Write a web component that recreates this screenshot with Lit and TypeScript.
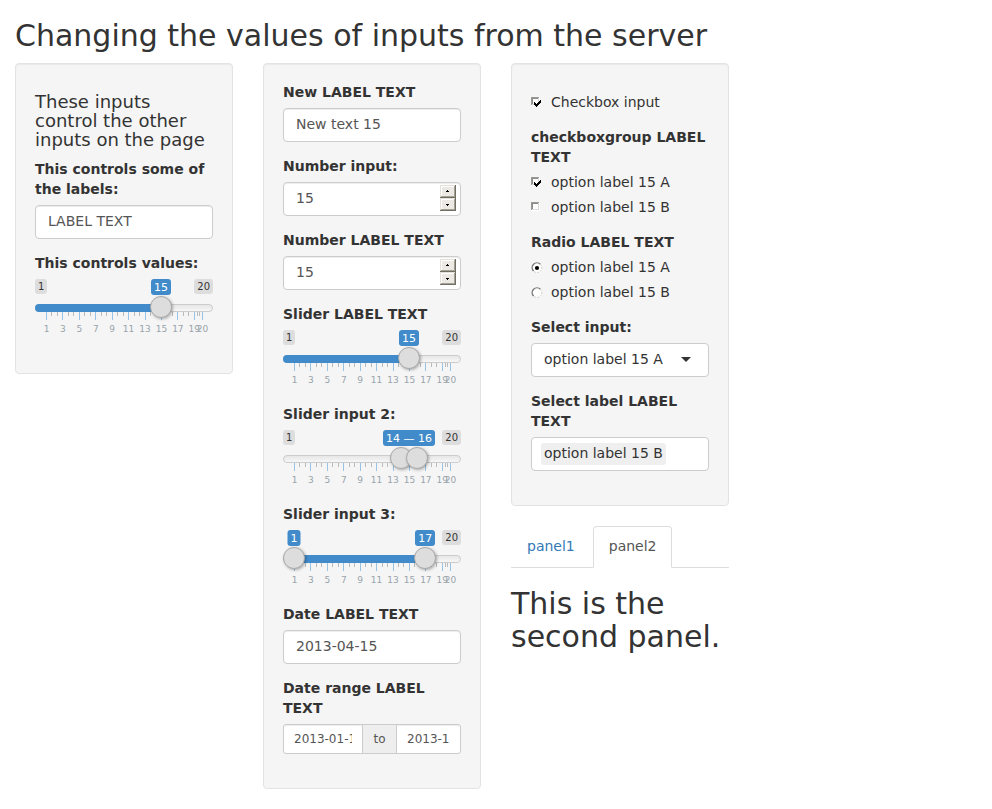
import { LitElement, html, svg, css } from "lit";
import { customElement, property } from "lit/decorators.js";
import { styleMap } from "lit/directives/style-map.js";

const MIN = 1;
const MAX = 20;
const percent = (v: number) => ((v - MIN) / (MAX - MIN)) * 100;

@customElement("range-slider")
class RangeSlider extends LitElement {
  @property({ type: Array }) values: number[] = [15];
  @property({ type: Boolean }) merged = false;

  static styles = css`
    :host { display: block; height: 60px; position: relative; line-height: 1.333; color: #333; }
    .tag { position: absolute; top: 0; font-size: 10px; height: 15px; line-height: 15px; padding: 0 3px; border-radius: 3px; background: #dddddd; white-space: nowrap; }
    .min { left: 0; }
    .max { right: 0; }
    .value { font-size: 11px; height: 16px; line-height: 18px; background: #428bca; color: #fff; transform: translateX(-50%); }
    .line { position: absolute; box-sizing: border-box; left: 0; right: 0; top: 25px; height: 8px; border: 1px solid #ccc; border-radius: 8px; background: linear-gradient(#dedede -50%, #fff 150%); }
    .track { position: absolute; left: 11px; right: 11px; top: 0; height: 60px; }
    .bar { position: absolute; top: 25px; height: 8px; background: #428bca; }
    .single { border-radius: 8px 0 0 8px; }
    .handle { position: absolute; top: 17px; width: 22px; height: 22px; box-sizing: border-box; border: 1px solid #aaa; border-radius: 50%; background: #ddd; box-shadow: 1px 1px 3px rgba(0, 0, 0, 0.3); transform: translateX(-11px); }
    .tick { position: absolute; top: 33px; width: 1px; height: 4px; background: #bbb; }
    .major { height: 8px; background: #99c2e4; }
    .number { position: absolute; top: 44px; font-size: 9px; line-height: 12px; color: #99a4ac; transform: translateX(-50%); }
  `;

  private grid() {
    const stops = [1, 3, 5, 7, 9, 11, 13, 15, 17, 19, 20];
    return stops.map((n, i) => {
      const next = stops[i + 1];
      const minors = next ? [1, 2].map((k) => n + ((next - n) * k) / 3) : [];
      return html`
        <span class="tick major" style=${styleMap({ left: percent(n) + "%" })}></span>
        ${minors.map((m) => html`<span class="tick" style=${styleMap({ left: percent(m) + "%" })}></span>`)}
        <span class="number" style=${styleMap({ left: `calc(${percent(n)}% + 0.5px)` })}>${n}</span>`;
    });
  }

  render() {
    const v = this.values;
    const last = v[v.length - 1];
    const bar = v.length === 1
      ? html`<span class="bar single" style=${styleMap({ left: "-11px", width: `calc(${percent(last)}% + 11px)` })}></span>`
      : this.merged ? "" : html`<span class="bar" style=${styleMap({ left: percent(v[0]) + "%", width: percent(last) - percent(v[0]) + "%" })}></span>`;
    return html`
      <div class="line"></div>
      ${v.length > 1 && v[0] === MIN ? "" : html`<span class="tag min">${MIN}</span>`}
      <span class="tag max">${MAX}</span>
      <div class="track">
        ${this.grid()} ${bar}
        ${this.merged
          ? html`<span class="tag value" style=${styleMap({ left: percent((v[0] + last) / 2) + "%" })}>${v[0]} — ${last}</span>`
          : v.map((n) => html`<span class="tag value" style=${styleMap({ left: percent(n) + "%" })}>${n}</span>`)}
        ${v.map((n) => html`<span class="handle" style=${styleMap({ left: percent(n) + "%" })}></span>`)}
      </div>`;
  }
}

const spinButton = (y: number, up: boolean) => svg`
  <g transform="translate(0 ${y})">
    <rect width="16" height="13" fill="#716f64"/>
    <rect width="15" height="12" fill="#e4e0d8"/>
    <rect x="1" y="1" width="14" height="11" fill="#a5a197"/>
    <rect x="1" y="1" width="13" height="10" fill="#fff"/>
    <rect x="2" y="2" width="12" height="9" fill="#ece9e4"/>
    ${up
      ? svg`<rect x="7" y="5" width="1" height="1"/><rect x="6" y="6" width="3" height="1"/>`
      : svg`<rect x="6" y="6" width="3" height="1"/><rect x="7" y="7" width="1" height="1"/>`}
  </g>`;

const spinner = html`<svg class="spinner" width="16" height="26" shape-rendering="crispEdges">${spinButton(0, true)}${spinButton(13, false)}</svg>`;

const checkbox = (on: boolean) => html`<svg class="mark" width="13" height="13" shape-rendering="crispEdges">
  <rect x="0" y="1" width="9" height="9" fill="#fff"/>
  <path d="M0 1h8v1h-7v7h-1z" fill="#9a9a98"/>
  <path d="M1 2h6v1h-5v5h-1z" fill="#8c8b88"/>
  <path d="M7 2h1v7h-7v-1h6z" fill="#dedbd6"/>
  ${on ? svg`<path d="M3 6h1v1h1v1h1v-1h1v-1h1v-1h1v-1h1v3h-1v1h-1v1h-1v1h-1v1h-1v-1h-1v-1h-1z" fill="#000"/>` : ""}
</svg>`;

const radio = (on: boolean) => html`<svg class="mark" width="13" height="13">
  <circle cx="6" cy="6.7" r="5" fill="#fff"/>
  <path d="M2.6 10.1A4.8 4.8 0 0 1 9.4 3.3" fill="none" stroke="#777" stroke-width="1.4"/>
  <path d="M9.4 3.3A4.8 4.8 0 0 1 2.6 10.1" fill="none" stroke="#d4d0c8" stroke-width="1" stroke-dasharray="2 1"/>
  ${on ? svg`<circle cx="6" cy="7" r="2.1" fill="#000"/>` : ""}
</svg>`;

@customElement("app-root")
class AppRoot extends LitElement {
  static styles = css`
    :host { display: block; box-sizing: border-box; width: 992px; height: 809px; padding: 19px 15px 0; background: #fff; color: #333; font: 14px/20px "DejaVu Sans", Verdana, sans-serif; overflow: hidden; }
    * { box-sizing: border-box; }
    h2, h4 { font-weight: 400; margin: 0; }
    h2 { font-size: 30px; line-height: 33px; }
    .title { margin-bottom: 11px; white-space: nowrap; }
    h4 { font-size: 18px; line-height: 19px; margin: 9px 0 11px; }
    .columns { display: grid; grid-template-columns: repeat(3, 218px); gap: 30px; align-items: start; }
    .well { background: #f5f5f5; border: 1px solid #e3e3e3; border-radius: 4px; padding: 19px; box-shadow: inset 0 1px 1px rgba(0, 0, 0, 0.05); display: flow-root; }
    .group { margin-bottom: 15px; display: flow-root; }
    .label { font-weight: 700; margin: -1px 0 6px; }
    .input { display: flex; align-items: center; height: 34px; padding: 0 12px 2px; background: #fff; border: 1px solid #ccc; border-radius: 4px; color: #555; box-shadow: inset 0 1px 1px rgba(0, 0, 0, 0.075); }
    .number { justify-content: space-between; padding: 0 4px 0 12px; }
    .number span { margin-bottom: 2px; }
    .spinner { display: block; margin-bottom: 2px; }
    .range { display: flex; height: 30px; font-size: 12px; line-height: 28px; color: #555; background: #fff; border: 1px solid #ccc; border-radius: 3px; box-shadow: inset 0 1px 1px rgba(0, 0, 0, 0.075); }
    .date { padding: 0 10px; width: 78px; flex: none; }
    .date.end { width: 63px; }
    .clip { display: block; overflow: hidden; white-space: nowrap; }
    .to { width: 35px; flex: none; text-align: center; background: #eee; border: solid #ccc; border-width: 0 1px; }
    .option { display: flex; margin-bottom: 5px; height: 20px; }
    .option span { line-height: 18px; }
    .option:last-child { margin-bottom: 0; }
    .lone { margin-top: 10px; }
    .mark { display: block; width: 20px; height: 13px; margin-top: 3px; flex: none; }
    .select { color: #333; justify-content: space-between; padding-right: 17px; box-shadow: none; }
    .caret { width: 0; height: 0; border: 5px solid transparent; border-top-color: #333; border-bottom: 0; margin-top: 1px; }
    .multi { color: #333; padding: 0 9px; box-shadow: none; }
    .chip { background: #efefef; border-radius: 3px; padding: 0 3px 2px; }
    .tabs { display: flex; gap: 2px; margin-top: 20px; border-bottom: 1px solid #ddd; }
    .tab { padding: 9px 15px 11px; border: 1px solid transparent; border-radius: 4px 4px 0 0; margin-bottom: -1px; color: #337ab7; }
    .active { width: 79px; background: #fff; border-color: #ddd #ddd #fff; color: #555; }
    .panel { margin-top: 19px; }
  `;

  private field(label: string, body: unknown) {
    return html`<div class="group"><div class="label">${label}</div>${body}</div>`;
  }
  private text(v: string) {
    return html`<div class="input">${v}</div>`;
  }
  private numeric(v: string) {
    return html`<div class="input number"><span>${v}</span>${spinner}</div>`;
  }
  private option(mark: unknown, label: string) {
    return html`<div class="option">${mark}<span>${label}</span></div>`;
  }

  render() {
    return html`
      <h2 class="title">Changing the values of inputs from the server</h2>
      <div class="columns">
        <div class="well">
          <h4>These inputs control the other inputs on the page</h4>
          ${this.field("This controls some of the labels:", this.text("LABEL TEXT"))}
          ${this.field("This controls values:", html`<range-slider .values=${[15]}></range-slider>`)}
        </div>
        <div class="well">
          ${this.field("New LABEL TEXT", this.text("New text 15"))}
          ${this.field("Number input:", this.numeric("15"))}
          ${this.field("Number LABEL TEXT", this.numeric("15"))}
          ${this.field("Slider LABEL TEXT", html`<range-slider .values=${[15]}></range-slider>`)}
          ${this.field("Slider input 2:", html`<range-slider .values=${[14, 16]} merged></range-slider>`)}
          ${this.field("Slider input 3:", html`<range-slider .values=${[1, 17]}></range-slider>`)}
          ${this.field("Date LABEL TEXT", this.text("2013-04-15"))}
          ${this.field("Date range LABEL TEXT", html`<div class="range">
            <div class="date"><span class="clip">2013-01-15</span></div>
            <div class="to">to</div>
            <div class="date end"><span class="clip">2013-12-15</span></div>
          </div>`)}
        </div>
        <div>
          <div class="well">
            <div class="group lone">${this.option(checkbox(true), "Checkbox input")}</div>
            ${this.field("checkboxgroup LABEL TEXT", html`<div>${this.option(checkbox(true), "option label 15 A")}${this.option(checkbox(false), "option label 15 B")}</div>`)}
            ${this.field("Radio LABEL TEXT", html`<div>${this.option(radio(true), "option label 15 A")}${this.option(radio(false), "option label 15 B")}</div>`)}
            ${this.field("Select input:", html`<div class="input select">option label 15 A<span class="caret"></span></div>`)}
            ${this.field("Select label LABEL TEXT", html`<div class="input multi"><span class="chip">option label 15 B</span></div>`)}
          </div>
          <div class="tabs"><div class="tab">panel1</div><div class="tab active">panel2</div></div>
          <h2 class="panel">This is the second panel.</h2>
        </div>
      </div>`;
  }
}
